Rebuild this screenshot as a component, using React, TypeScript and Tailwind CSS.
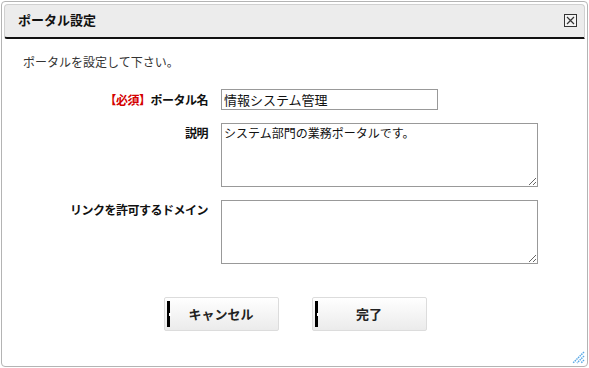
const font = "font-['Noto_Sans_CJK_JP','Noto_Sans',sans-serif]";

function DialogButton({ label }: { label: string }) {
  return (
    <button
      className={`relative w-[115px] h-[34px] border border-[#dcdcdc] rounded-[2px] bg-gradient-to-b from-white to-[#ebebeb] text-[13px] font-bold text-[#222] ${font}`}
    >
      <span className="absolute left-[2px] top-[3px] bottom-[3px] w-[3px] bg-black" />
      <span className="absolute left-[4px] top-[15px] w-[2px] h-[3px] bg-white" />
      {label}
    </button>
  );
}

export default function App() {
  return (
    <div className={`w-[589px] h-[368px] bg-white p-[1px] ${font}`}>
      <div className="relative w-full h-full border border-[#b4b4b4] rounded-[4px] p-[2px] flex flex-col">
        {/* Title bar */}
        <div className="h-[35px] flex items-center justify-between bg-[#ececec] border border-[#d0d0d0] border-b-2 border-b-[#111] rounded-t-[4px] rounded-bl-[3px] pl-[13px] pr-[7px] pb-[2px]">
          <span className="text-[13px] font-bold text-[#111]">ポータル設定</span>
          <span className="w-[13px] h-[13px] border border-[#333] bg-[#f4f4f4] flex items-center justify-center">
            <svg width="9" height="9" viewBox="0 0 9 9">
              <path d="M1 1L8 8M8 1L1 8" stroke="#333" strokeWidth="1.2" />
            </svg>
          </span>
        </div>

        {/* Body */}
        <p className="mt-[15px] ml-[19px] text-[12px] leading-[16px] text-[#333]">ポータルを設定して下さい。</p>

        <div className="mt-[19px] grid grid-cols-[204px_317px] gap-x-[13px] gap-y-[13px] text-[12px]">
          <div className="flex items-center justify-end font-bold text-[#111] h-[21px] tracking-[-0.5px]">
            <span className="text-[#d40000]">【必須】</span>ポータル名
          </div>
          <input
            defaultValue="情報システム管理"
            className={`w-[217px] h-[21px] border border-[#999] px-[2px] text-[13px] text-[#111] outline-none ${font}`}
          />

          <div className="flex justify-end font-bold text-[#111] pt-[1px] tracking-[-0.5px]">説明</div>
          <textarea
            defaultValue="システム部門の業務ポータルです。"
            className={`w-[317px] h-[64px] border border-[#999] px-[2px] py-[1px] text-[12px] leading-[16px] text-[#111] outline-none ${font}`}
          />

          <div className="flex justify-end font-bold text-[#111] pt-[1px] tracking-[-0.5px]">リンクを許可するドメイン</div>
          <textarea
            className={`w-[317px] h-[64px] border border-[#999] px-[2px] py-[1px] text-[12px] outline-none ${font}`}
          />
        </div>

        <div className="mt-[33px] flex justify-center gap-[33px] pl-[1px]">
          <DialogButton label="キャンセル" />
          <DialogButton label="完了" />
        </div>

        {/* Resize grip */}
        <svg className="absolute right-[2px] bottom-[2px]" width="13" height="13" viewBox="0 0 13 13">
          <path d="M12 1L1 12M12 5L5 12M12 9L9 12" stroke="#5aa9e6" strokeWidth="1.5" strokeDasharray="1.5 0.8" />
        </svg>
      </div>
    </div>
  );
}
